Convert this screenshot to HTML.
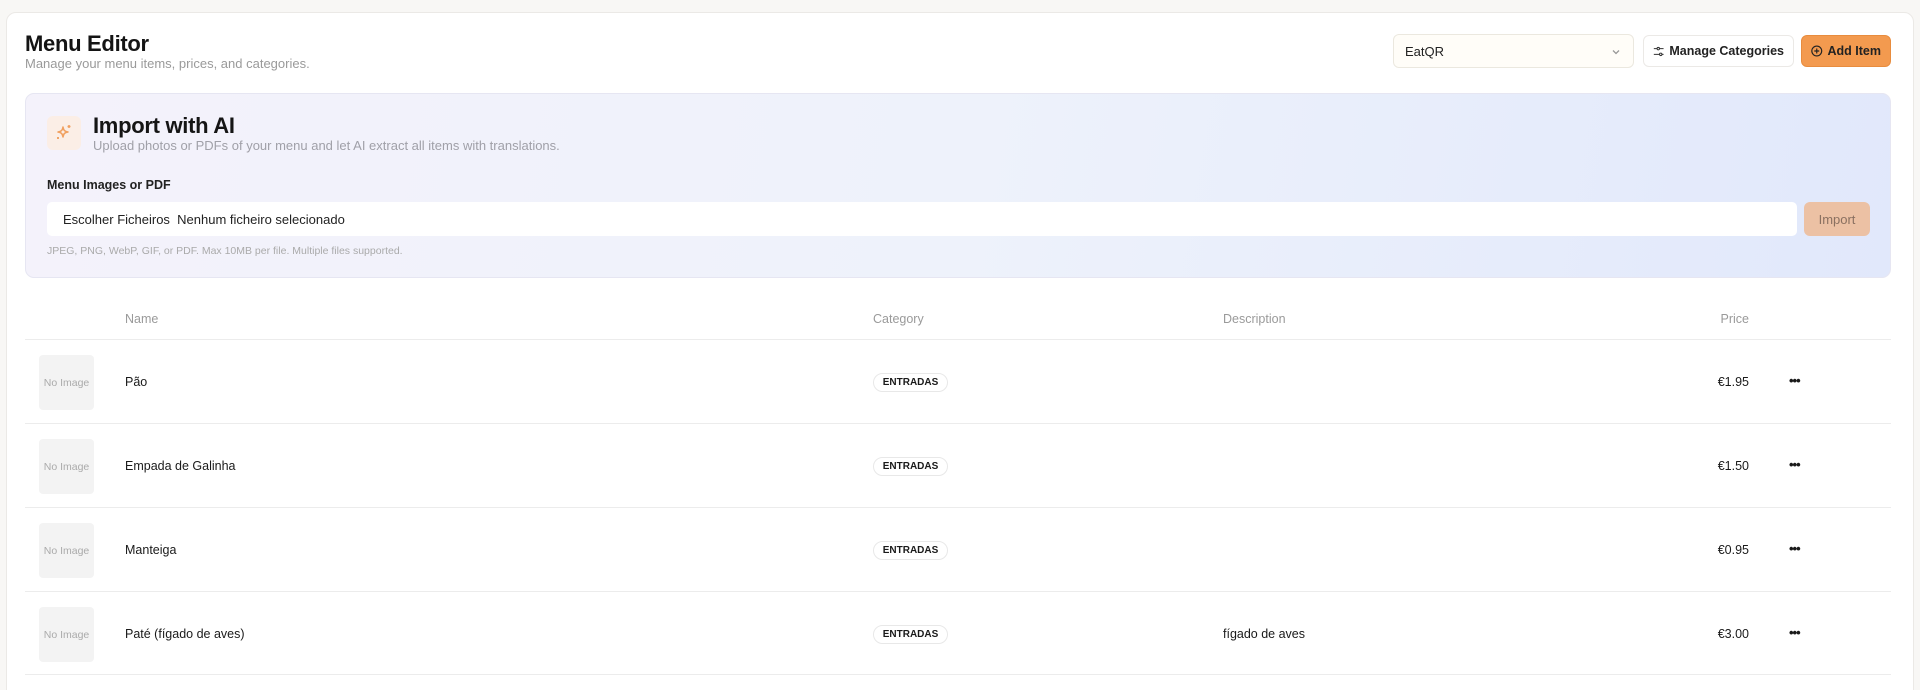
<!DOCTYPE html>
<html><head><meta charset="utf-8">
<style>
*{box-sizing:border-box;margin:0;padding:0}
html{width:1920px;height:690px;overflow:hidden}
body{width:1920px;height:690px;overflow:hidden;background:#f8f7f5;font-family:"Liberation Sans",sans-serif;color:#1a1a1a;position:relative}
.card{position:absolute;left:6px;top:12px;width:1908px;height:690px;background:#fff;border:1px solid #ebe9e6;border-radius:10px;overflow:hidden}
.abs{position:absolute}
h1{position:absolute;left:18px;top:18px;font-size:22px;font-weight:600;letter-spacing:-0.3px;color:#141414}
.sub{left:18px;top:43px;font-size:13px;color:#9a9a9a}
.sel{left:1386px;top:21px;width:241px;height:34px;border:1px solid #ebe8df;border-radius:6px;background:#fffdf8;font-size:13px;padding:9px 11px;color:#222}
.btn{top:22px;height:32px;border-radius:6px;font-size:12.5px;font-weight:600;display:flex;align-items:center;gap:5px;padding:0 9px;white-space:nowrap}
.mc{left:1636px;width:151px;border:1px solid #ebe9e6;background:#fff;color:#222}
.ai{left:1794px;width:90px;background:#f39a4f;color:#222;border:1px solid #e88c3e}
.aibox{left:18px;top:80px;width:1866px;height:185px;border-radius:9px;border:1px solid #e6e6f2;background:linear-gradient(100deg,#f4f2fb 0%,#eef2fb 50%,#e1e8fb 100%)}
.ic{left:21px;top:22px;width:34px;height:34px;border-radius:6px;background:#fbeee6;display:flex;align-items:center;justify-content:center}
.t2{left:67px;top:19px;font-size:22px;font-weight:600;color:#151515;letter-spacing:-0.3px}
.s2{left:67px;top:44px;font-size:13px;color:#a0a0a8}
.lab{left:21px;top:84px;font-size:12.5px;font-weight:600;color:#222}
.inp{left:21px;top:108px;width:1750px;height:34px;background:#fff;border-radius:5px;font-size:13px;padding:10px 16px;color:#222}
.imp{left:1778px;top:108px;width:66px;height:34px;border-radius:6px;background:#ecc1a4;color:#8a7060;font-size:13px;display:flex;align-items:center;justify-content:center}
.hint{left:21px;top:151px;font-size:10.5px;color:#aaa}
.th{top:299px;font-size:12.5px;color:#9a9a9a}
.line{position:absolute;left:18px;width:1866px;height:1px;background:#ececec}
.ph{position:absolute;left:32px;width:55px;height:55px;background:#f3f3f3;border-radius:4px;font-size:10.5px;color:#aaa;display:flex;align-items:center;justify-content:center}
.nm{position:absolute;left:118px;font-size:12.5px;font-weight:500;color:#1a1a1a}
.bd{position:absolute;left:866px;height:19px;width:75px;border:1px solid #e8e8e8;border-radius:10px;font-size:10px;font-weight:700;display:flex;align-items:center;justify-content:center;color:#1a1a1a}
.pr{position:absolute;right:164px;font-size:12.5px;font-weight:500}
.dt{position:absolute;left:1782px;font-size:13px;font-weight:700;letter-spacing:-1px}
.ds{position:absolute;left:1216px;font-size:12.5px}
</style></head><body>
<div class="card">
<h1>Menu Editor</h1>
<div class="abs sub">Manage your menu items, prices, and categories.</div>
<div class="abs sel">EatQR<svg class="abs" style="right:12px;top:13px" width="10" height="8" viewBox="0 0 10 8"><path d="M2 2.5l3 3 3-3" fill="none" stroke="#999" stroke-width="1.3"/></svg></div>
<div class="abs btn mc"><svg width="13" height="13" viewBox="0 0 14 14" fill="none" stroke="#333" stroke-width="1.3"><path d="M1 3.5h4M8 3.5h5M1 10.5h7M11 10.5h2"/><circle cx="6.5" cy="3.5" r="1.5"/><circle cx="9.5" cy="10.5" r="1.5"/></svg>Manage Categories</div>
<div class="abs btn ai"><svg width="14" height="14" viewBox="0 0 14 14" fill="none" stroke="#222" stroke-width="1.4"><circle cx="7" cy="7" r="6"/><path d="M7 4v6M4 7h6"/></svg>Add Item</div>
<div class="abs aibox">
<div class="abs ic"><svg width="20" height="20" viewBox="0 0 20 20" fill="none" stroke="#f0a060" stroke-width="1.5" stroke-linejoin="round"><path d="M9 4c.6 3.4 1.6 4.4 5 5-3.4.6-4.4 1.6-5 5-.6-3.4-1.6-4.4-5-5 3.4-.6 4.4-1.6 5-5z"/><path d="M15 2v3M13.5 3.5h3M4 14v2M3 15h2"/></svg></div>
<div class="abs t2">Import with AI</div>
<div class="abs s2">Upload photos or PDFs of your menu and let AI extract all items with translations.</div>
<div class="abs lab">Menu Images or PDF</div>
<div class="abs inp"><span style="font-weight:500">Escolher Ficheiros</span>&nbsp;&nbsp;Nenhum ficheiro selecionado</div>
<div class="abs imp">Import</div>
<div class="abs hint">JPEG, PNG, WebP, GIF, or PDF. Max 10MB per file. Multiple files supported.</div>
</div>
<div class="abs th" style="left:118px">Name</div>
<div class="abs th" style="left:866px">Category</div>
<div class="abs th" style="left:1216px">Description</div>
<div class="abs th" style="right:164px">Price</div>
<div class="line" style="top:326px"></div>

<div class="ph" style="top:342px">No Image</div><div class="nm" style="top:362px">Pão</div><div class="bd" style="top:360px">ENTRADAS</div><div class="pr" style="top:362px">€1.95</div><div class="dt" style="top:360px">•••</div>
<div class="line" style="top:410px"></div>
<div class="ph" style="top:426px">No Image</div><div class="nm" style="top:446px">Empada de Galinha</div><div class="bd" style="top:444px">ENTRADAS</div><div class="pr" style="top:446px">€1.50</div><div class="dt" style="top:444px">•••</div>
<div class="line" style="top:494px"></div>
<div class="ph" style="top:510px">No Image</div><div class="nm" style="top:530px">Manteiga</div><div class="bd" style="top:528px">ENTRADAS</div><div class="pr" style="top:530px">€0.95</div><div class="dt" style="top:528px">•••</div>
<div class="line" style="top:578px"></div>
<div class="ph" style="top:594px">No Image</div><div class="nm" style="top:614px">Paté (fígado de aves)</div><div class="bd" style="top:612px">ENTRADAS</div><div class="ds" style="top:614px">fígado de aves</div><div class="pr" style="top:614px">€3.00</div><div class="dt" style="top:612px">•••</div>
<div class="line" style="top:661px"></div>
<div class="ph" style="top:677px"></div>
</div>
</body></html>
